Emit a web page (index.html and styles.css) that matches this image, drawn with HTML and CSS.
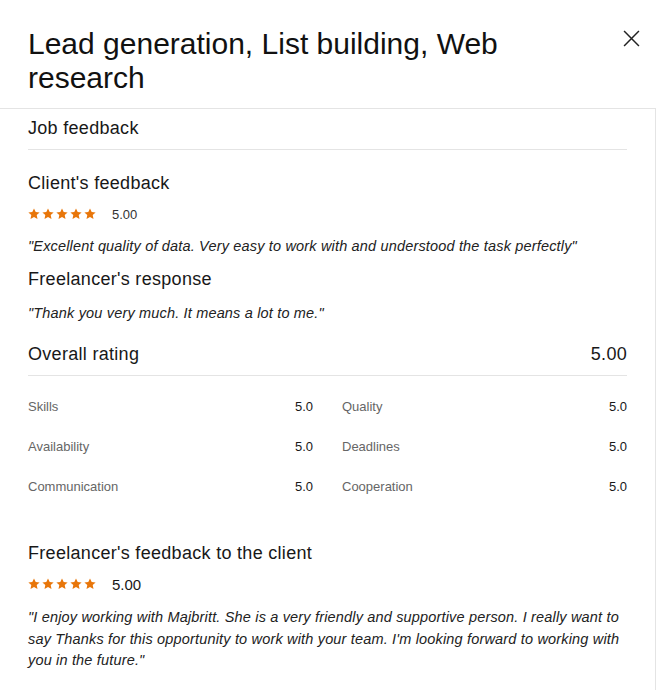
FILE: index.html
```html
<!DOCTYPE html>
<html lang="en">
<head>
<meta charset="utf-8">
<title>Job feedback</title>
<link rel="stylesheet" href="styles.css">
</head>
<body>
<div class="modal">
  <header class="modal-header">
    <h1 class="title">Lead generation, List building, Web research</h1>
    <button class="close" aria-label="Close">
      <svg viewBox="0 0 16 16" width="17" height="17"><path d="M1 1L15 15M15 1L1 15" stroke="#222" stroke-width="1.4" fill="none"/></svg>
    </button>
  </header>
  <div class="modal-body">
    <div class="section-title">Job feedback</div>
    <hr class="rule">
    <h2 class="sub">Client's feedback</h2>
    <div class="rating">
      <span class="stars">
        <svg viewBox="0 0 12 12"><path d="M6 0.4l1.7 3.6 3.9.4-2.9 2.7.8 3.9L6 9.1 2.5 11l.8-3.9L.4 4.4l3.9-.4z"/></svg>
        <svg viewBox="0 0 12 12"><path d="M6 0.4l1.7 3.6 3.9.4-2.9 2.7.8 3.9L6 9.1 2.5 11l.8-3.9L.4 4.4l3.9-.4z"/></svg>
        <svg viewBox="0 0 12 12"><path d="M6 0.4l1.7 3.6 3.9.4-2.9 2.7.8 3.9L6 9.1 2.5 11l.8-3.9L.4 4.4l3.9-.4z"/></svg>
        <svg viewBox="0 0 12 12"><path d="M6 0.4l1.7 3.6 3.9.4-2.9 2.7.8 3.9L6 9.1 2.5 11l.8-3.9L.4 4.4l3.9-.4z"/></svg>
        <svg viewBox="0 0 12 12"><path d="M6 0.4l1.7 3.6 3.9.4-2.9 2.7.8 3.9L6 9.1 2.5 11l.8-3.9L.4 4.4l3.9-.4z"/></svg>
      </span>
      <span class="score small">5.00</span>
    </div>
    <p class="quote">"Excellent quality of data. Very easy to work with and understood the task perfectly"</p>
    <h2 class="sub sub-tight">Freelancer's response</h2>
    <p class="quote">"Thank you very much. It means a lot to me."</p>

    <div class="overall">
      <span>Overall rating</span>
      <span>5.00</span>
    </div>
    <hr class="rule">
    <div class="grid">
      <div class="cell"><span class="label">Skills</span><span class="val">5.0</span></div>
      <div class="cell"><span class="label">Quality</span><span class="val">5.0</span></div>
      <div class="cell"><span class="label">Availability</span><span class="val">5.0</span></div>
      <div class="cell"><span class="label">Deadlines</span><span class="val">5.0</span></div>
      <div class="cell"><span class="label">Communication</span><span class="val">5.0</span></div>
      <div class="cell"><span class="label">Cooperation</span><span class="val">5.0</span></div>
    </div>

    <h2 class="sub sub-far">Freelancer's feedback to the client</h2>
    <div class="rating rating-far">
      <span class="stars">
        <svg viewBox="0 0 12 12"><path d="M6 0.4l1.7 3.6 3.9.4-2.9 2.7.8 3.9L6 9.1 2.5 11l.8-3.9L.4 4.4l3.9-.4z"/></svg>
        <svg viewBox="0 0 12 12"><path d="M6 0.4l1.7 3.6 3.9.4-2.9 2.7.8 3.9L6 9.1 2.5 11l.8-3.9L.4 4.4l3.9-.4z"/></svg>
        <svg viewBox="0 0 12 12"><path d="M6 0.4l1.7 3.6 3.9.4-2.9 2.7.8 3.9L6 9.1 2.5 11l.8-3.9L.4 4.4l3.9-.4z"/></svg>
        <svg viewBox="0 0 12 12"><path d="M6 0.4l1.7 3.6 3.9.4-2.9 2.7.8 3.9L6 9.1 2.5 11l.8-3.9L.4 4.4l3.9-.4z"/></svg>
        <svg viewBox="0 0 12 12"><path d="M6 0.4l1.7 3.6 3.9.4-2.9 2.7.8 3.9L6 9.1 2.5 11l.8-3.9L.4 4.4l3.9-.4z"/></svg>
      </span>
      <span class="score big">5.00</span>
    </div>
    <p class="quote long">"I enjoy working with Majbritt. She is a very friendly and supportive person. I really want to say Thanks for this opportunity to work with your team. I'm looking forward to working with you in the future."</p>
  </div>
</div>
</body>
</html>
```

FILE: styles.css
```css
* { box-sizing: border-box; }
html, body { margin: 0; padding: 0; background: #fff; }
body {
  font-family: "Liberation Sans", Arial, sans-serif;
  color: #181818;
  width: 657px;
  height: 690px;
  overflow: hidden;
}
.modal { width: 656px; }

.modal-header {
  display: flex;
  justify-content: space-between;
  align-items: flex-start;
  padding: 27px 16px 13px 28px;
  border-bottom: 1px solid #e4e4e4;
}
.title {
  margin: 0;
  flex: 1;
  padding-right: 40px;
  font-size: 30px;
  line-height: 34px;
  font-weight: 400;
  color: #111;
}
.close {
  border: 0;
  background: none;
  padding: 0;
  margin-top: 3px;
  width: 17px;
  height: 17px;
  cursor: pointer;
}
.close svg { display: block; }

.modal-body {
  border-right: 1px solid #e4e4e4;
  padding: 7px 28px 40px 28px;
}
.section-title {
  font-size: 18px;
  line-height: 24px;
  letter-spacing: 0.3px;
  color: #181818;
}
.rule {
  border: 0;
  border-top: 1px solid #e4e4e4;
  margin: 9px 0 0 0;
}
.sub {
  margin: 21px 0 0;
  font-size: 18px;
  line-height: 24px;
  letter-spacing: 0.3px;
  font-weight: 400;
  color: #181818;
}
.sub-tight { margin-top: 10px; }
.sub-far { margin-top: 44px; }
.rating {
  display: flex;
  align-items: center;
  margin-top: 9px;
  height: 20px;
}
.rating-far { margin-top: 9px; }
.stars { display: flex; gap: 2px; }
.stars svg { width: 12px; height: 12px; fill: #e8760a; display: block; }
.score { margin-left: 16px; color: #333; }
.score.small { font-size: 13px; }
.score.big { font-size: 15px; color: #181818; }
.quote {
  margin: 12px 0 0;
  font-size: 14.5px;
  line-height: 21px;
  letter-spacing: 0.17px;
  font-style: italic;
  color: #222;
}
.long { line-height: 21.5px; margin-top: 13px; }

.overall {
  display: flex;
  justify-content: space-between;
  margin-top: 18px;
  font-size: 18px;
  line-height: 24px;
  letter-spacing: 0.3px;
}
.grid {
  display: grid;
  grid-template-columns: 1fr 1fr;
  column-gap: 29px;
  row-gap: 20px;
  margin-top: 21px;
}
.cell {
  display: flex;
  justify-content: space-between;
  font-size: 13px;
  line-height: 20px;
}
.label { color: #666; }
.val { color: #181818; }
```
